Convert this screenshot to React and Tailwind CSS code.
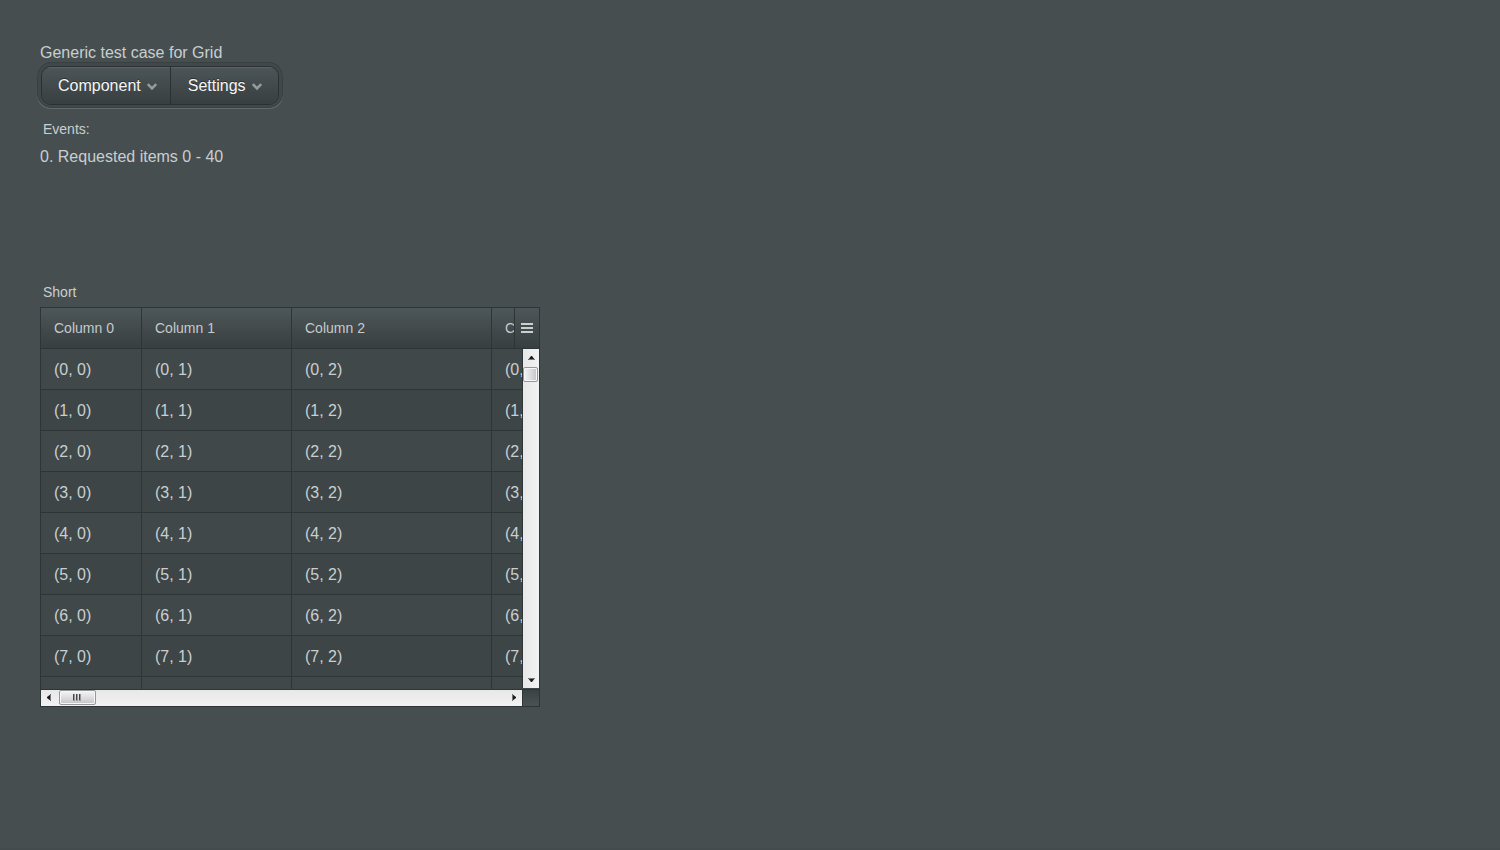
const ROWS = [0, 1, 2, 3, 4, 5, 6, 7, 8];
const COLUMNS = [0, 1, 2, 3];

function MenuButton({ label, className }) {
  return (
    <button
      type="button"
      aria-haspopup="menu"
      className={
        "flex h-[37px] items-center bg-linear-to-b from-[#4c5557] to-[#383f41] text-base text-[#f4f6f6] shadow-[inset_0_1px_0_#5a6467] [text-shadow:0_-1px_0_#2b3133] " +
        className
      }
    >
      {label}
      <svg aria-hidden="true" className="ml-[5px] h-3 w-3" viewBox="0 0 12 12" fill="none">
        <path d="M1.8 4.2L6 8.4L10.2 4.2" stroke="#959b9b" strokeWidth="2.6" />
      </svg>
    </button>
  );
}

function VerticalScrollbar() {
  return (
    <div className="absolute bottom-px right-0 top-[41px] flex w-[17px] flex-col border-l border-[#2e3537] bg-linear-to-r from-[#e9e8e9] to-[#f3f2f3]">
      <svg aria-hidden="true" className="h-[18px] w-4 shrink-0" viewBox="0 0 16 18">
        <path d="M8 7h1l3 4H5z" fill="#1c1c1c" />
        <path d="M6 10h6v1H5z" fill="#777" />
      </svg>
      <div className="h-[15px] w-[15px] shrink-0 rounded-xs border border-[#979797] bg-linear-to-r from-[#f4f4f4] via-[#dedee0] to-[#c4c4c8] shadow-[inset_0_0_0_1px_#f6f6f6]" />
      <div className="grow" />
      <svg aria-hidden="true" className="h-[17px] w-4 shrink-0" viewBox="0 0 16 17">
        <path d="M5 7h7l-3 4H8z" fill="#1c1c1c" />
        <path d="M5 7h7v1H5z" fill="#777" />
      </svg>
    </div>
  );
}

function HorizontalScrollbar() {
  return (
    <div className="flex h-4 grow items-start bg-linear-to-b from-[#e9e8e9] to-[#f3f2f3]">
      <svg aria-hidden="true" className="h-4 w-[18px] shrink-0" viewBox="0 0 18 16">
        <path d="M10 4v7L6 8V7z" fill="#1c1c1c" />
        <path d="M9 5h1v5H9z" fill="#777" />
      </svg>
      <div className="flex h-[15px] w-[37px] shrink-0 items-center justify-center rounded-xs border border-[#979797] bg-linear-to-b from-[#f4f4f4] via-[#dedee0] to-[#c4c4c8] shadow-[inset_0_0_0_1px_#f6f6f6]">
        <svg aria-hidden="true" className="h-[7px] w-[9px]" viewBox="0 0 9 7">
          <path d="M0 0h2v7H0zM3 0h2v7H3zM6 0h2v7H6z" fill="#999" />
          <path d="M0 0h1v6H0zM3 0h1v6H3zM6 0h1v6H6z" fill="#444" />
        </svg>
      </div>
      <div className="grow" />
      <svg aria-hidden="true" className="h-4 w-4 shrink-0" viewBox="0 0 16 16">
        <path d="M6 4v7l4-3V7z" fill="#1c1c1c" />
        <path d="M6 5h1v5H6z" fill="#777" />
      </svg>
    </div>
  );
}

function Grid() {
  return (
    <section
      aria-labelledby="grid-caption"
      className="w-full max-w-[500px] border border-[#2e3537] bg-[#3e4648]"
    >
      <div className="relative h-[381px] overflow-hidden">
        <table className="w-[631px] table-fixed border-separate border-spacing-0 text-left">
          <colgroup>
            <col className="w-[101px]" />
            <col className="w-[150px]" />
            <col className="w-[200px]" />
            <col className="w-[180px]" />
          </colgroup>
          <thead>
            <tr>
              {COLUMNS.map((c) => (
                <th
                  key={c}
                  scope="col"
                  className="h-[41px] border-b border-r border-[#2e3537] bg-linear-to-b from-[#4d5658] to-[#393f41] px-[13px] py-0 text-sm font-normal text-[#c4cbcc]"
                >
                  {`Column ${c}`}
                </th>
              ))}
            </tr>
          </thead>
          <tbody>
            {ROWS.map((r) => (
              <tr key={r} className="odd:bg-[#40484a] even:bg-[#3d4547]">
                {COLUMNS.map((c) => (
                  <td
                    key={c}
                    className="h-[41px] border-b border-r border-[#2e3537] px-[13px] pb-0 pt-[2px] text-base"
                  >
                    {`(${r}, ${c})`}
                  </td>
                ))}
              </tr>
            ))}
          </tbody>
        </table>
        <button
          type="button"
          aria-label="Toggle columns"
          className="absolute right-0 top-0 flex h-[41px] w-[25px] items-center justify-center border-b border-l border-[#2e3537] bg-linear-to-b from-[#4d5658] to-[#393f41]"
        >
          <svg aria-hidden="true" className="h-[10px] w-3" viewBox="0 0 12 10">
            <path d="M0 0h12v2H0zM0 4h12v2H0zM0 8h12v2H0z" fill="#c9d0d0" />
          </svg>
        </button>
        <VerticalScrollbar />
      </div>
      <div className="flex border-t border-[#2e3537]">
        <HorizontalScrollbar />
        <div className="h-4 w-[17px] border-l border-[#2e3537] bg-linear-to-b from-[#3b4244] to-[#495254]" />
      </div>
    </section>
  );
}

export default function App() {
  return (
    <main className="min-h-screen border-b-2 border-[#434b4d] bg-[#464e50] px-10 pt-10 font-['Liberation_Sans',Arial,sans-serif] text-base text-[#c9cfd0]">
      <h1 className="h-[22px] leading-[26px]">Generic test case for Grid</h1>
      <nav
        aria-label="Test menu"
        className="-ml-[3px] flex w-fit rounded-[14px] border border-[#394042] bg-[#40484a] px-[3px] pb-[2px] pt-[3px] shadow-[0_1px_0_#626b6d]"
      >
        <div className="flex overflow-hidden rounded-[10px] border border-[#2b3133]">
          <MenuButton label="Component" className="border-r border-[#2b3133] pl-4 pr-3" />
          <MenuButton label="Settings" className="pl-[17px] pr-[15px]" />
        </div>
      </nav>
      <section aria-labelledby="events-caption" className="h-[172px] pt-[9px]">
        <h2 id="events-caption" className="pl-[3px] text-sm leading-6">Events:</h2>
        <p className="pt-1 leading-6">0. Requested items 0 - 40</p>
      </section>
      <h2 id="grid-caption" className="h-[27px] pl-[3px] text-sm leading-6">Short</h2>
      <Grid />
    </main>
  );
}
